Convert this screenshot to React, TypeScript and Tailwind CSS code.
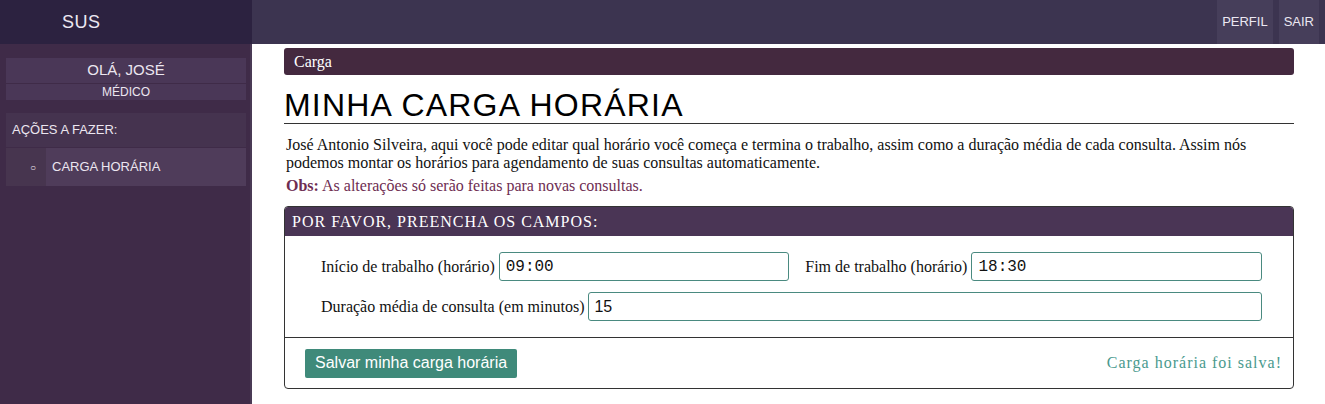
export default function App() {
  const serif = { fontFamily: '"Liberation Serif", "Times New Roman", serif' };
  const mono = { fontFamily: '"Liberation Mono", monospace' };
  return (
    <div className="w-[1325px] h-[404px] bg-white overflow-hidden flex flex-col" style={{ fontFamily: '"Liberation Sans", Arial, sans-serif' }}>
      {/* topo */}
      <div className="h-[44px] flex shrink-0 bg-[#3c3450]">
        <div className="w-[252px] bg-[#2c2240] flex items-center pl-[62px] text-[18px] text-[#ece8f2] tracking-[0.5px]">
          SUS
        </div>
        <div className="flex-1" />
        <div className="flex h-full gap-[6px] pr-[6px]">
          <div className="px-[5px] bg-[#463e5a] flex items-center text-[13px] text-[#ece8f2]">PERFIL</div>
          <div className="px-[5px] bg-[#463e5a] flex items-center text-[13px] text-[#ece8f2]">SAIR</div>
        </div>
      </div>

      <div className="flex flex-1">
        {/* lateral */}
        <div className="w-[252px] bg-[#3f2b48] border-r-2 border-[#4a3a55] pt-[14px] pl-[6px] pr-[4px] text-[#ece6f0]">
          <div className="bg-[#4a3757] text-center">
            <div className="h-[26px] flex items-center justify-center text-[15px] border-b border-[#3f2b48]">OLÁ, JOSÉ</div>
            <div className="h-[16px] flex items-center justify-center text-[12px]">MÉDICO</div>
          </div>
          <div className="mt-[13px] bg-[#45334f] h-[34px] flex items-center pl-[6px] text-[13px]">AÇÕES A FAZER:</div>
          <div className="flex h-[38px] mt-[1px]">
            <div className="w-[40px] bg-[#47354f] flex items-center justify-end pr-[10px] text-[10px]">○</div>
            <div className="flex-1 bg-[#4f3c5a] flex items-center pl-[6px] text-[13px]">CARGA HORÁRIA</div>
          </div>
        </div>

        {/* conteúdo */}
        <div className="flex-1 pl-[32px] pr-[31px] pt-[4px]">
          <div className="h-[27px] bg-[#44293f] rounded-[3px] flex items-center pl-[10px] text-white text-[16px]" style={serif}>
            Carga
          </div>
          <h1 className="mt-[13px] text-[32px] leading-[34px] tracking-[1.2px] text-black border-b border-[#333] pb-[1px]">
            MINHA CARGA HORÁRIA
          </h1>
          <p className="mt-[12px] px-[2px] text-[16px] leading-[18px] text-[#111]" style={serif}>
            José Antonio Silveira, aqui você pode editar qual horário você começa e termina o trabalho, assim como a duração média de cada consulta. Assim nós podemos montar os horários para agendamento de suas consultas automaticamente.
          </p>
          <p className="mt-[5px] px-[2px] text-[16px] leading-[18px] text-[#6e2d52]" style={serif}>
            <b>Obs:</b> As alterações só serão feitas para novas consultas.
          </p>

          <div className="mt-[11px] border border-[#333] rounded-[4px] overflow-hidden" style={serif}>
            <div className="h-[29px] bg-[#4a3555] flex items-center pl-[7px] text-white text-[16px] tracking-[1px]">
              POR FAVOR, PREENCHA OS CAMPOS:
            </div>
            <div className="pl-[36px] pr-[31px] pt-[16px] pb-[16px] flex flex-col gap-[11px] text-[16px] text-[#111]">
              <div className="flex items-center gap-[4px]">
                <span>Início de trabalho (horário)</span>
                <div className="flex-1 h-[29px] border border-[#4a8a80] rounded-[3px] flex items-center pl-[6px] text-[16px]" style={mono}>09:00</div>
                <span className="ml-[12px]">Fim de trabalho (horário)</span>
                <div className="flex-1 h-[29px] border border-[#4a8a80] rounded-[3px] flex items-center pl-[6px] text-[16px]" style={mono}>18:30</div>
              </div>
              <div className="flex items-center gap-[4px]">
                <span>Duração média de consulta (em minutos)</span>
                <div className="flex-1 h-[29px] border border-[#4a8a80] rounded-[3px] flex items-center pl-[5px] text-[16px]" style={{ fontFamily: '"Liberation Sans", Arial, sans-serif' }}>15</div>
              </div>
            </div>
            <div className="border-t border-[#333] h-[51px] flex items-center justify-between pl-[20px] pr-[11px]">
              <div className="h-[29px] px-[10px] bg-[#3f8a7a] rounded-[2px] flex items-center text-white text-[16px]" style={{ fontFamily: '"Liberation Sans", Arial, sans-serif' }}>
                Salvar minha carga horária
              </div>
              <span className="text-[#4a9a8e] text-[16px] tracking-[1px]">Carga horária foi salva!</span>
            </div>
          </div>
        </div>
      </div>
    </div>
  );
}
